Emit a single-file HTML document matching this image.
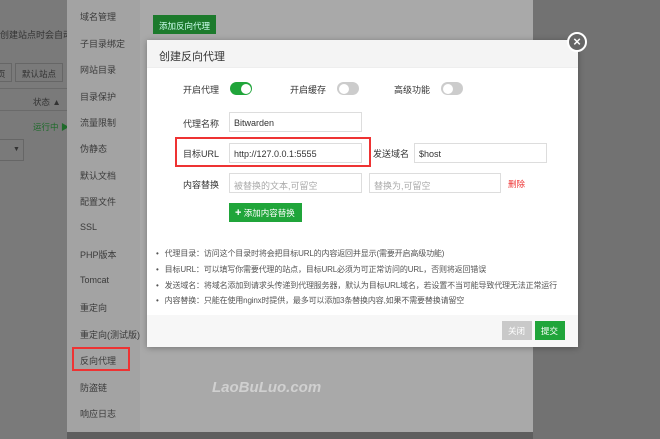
<!DOCTYPE html>
<html><head><meta charset="utf-8"><style>
*{margin:0;padding:0;box-sizing:border-box}
body{width:660px;height:439px;overflow:hidden;background:#7a7a7a;font-family:"Liberation Sans","Noto Sans CJK SC",sans-serif;position:relative;font-size:9px;color:#333}
.a{position:absolute;white-space:nowrap}
.panel{left:67px;top:0;width:466px;height:432px;background:#a9a9a9}
.side{left:67px;top:0;width:73px;height:432px;background:#a3a3a3}
.si{left:80px;font-size:9px;color:#3a3a3a}
.dlg{left:147px;top:40px;width:431px;height:307px;background:#fff;box-shadow:0 1px 6px rgba(0,0,0,.3)}
.hd{left:0;top:0;width:431px;height:28px;background:#f4f4f4;border-bottom:1px solid #eee}
.ft{left:0;top:275px;width:431px;height:32px;background:#f7f7f7}
.lb{font-size:9px;color:#333}
.in{border:1px solid #ddd;height:20px;font-size:9px;padding:5px 4px;color:#333;background:#fff}
.ph{color:#aaa}
.tg{width:22px;height:13px;border-radius:7px;background:#ccc}
.tg i{position:absolute;top:1.5px;left:1.5px;width:10px;height:10px;border-radius:50%;background:#fff}
.tg.on{background:#20a53a}.tg.on i{left:10.5px}
.bl{left:9px;font-size:8px;color:#555;letter-spacing:-0.15px}
.bl:before{content:"•";margin-right:6px;color:#555}
</style></head><body>
<div class="a" style="left:0;top:28px;font-size:9px;color:#333">创建站点时会自动</div>
<div class="a" style="left:-5px;top:63px;width:17px;height:19px;border:1px solid #666"></div>
<div class="a" style="left:-3px;top:68px;font-size:8.5px;color:#333">页</div>
<div class="a" style="left:15px;top:63px;width:48px;height:19px;border:1px solid #666;font-size:8.5px;padding:4px 0 0 6px;color:#333">默认站点</div>
<div class="a" style="left:0;top:88px;width:67px;height:1px;background:#6a6a6a"></div>
<div class="a" style="left:33px;top:96px;font-size:8.5px;color:#333">状态 ▲</div>
<div class="a" style="left:0;top:110px;width:67px;height:1px;background:#6a6a6a"></div>
<div class="a" style="left:33px;top:121px;font-size:8.5px;color:#1e6b2a">运行中 ▶</div>
<div class="a" style="left:-3px;top:139px;width:27px;height:22px;border:1px solid #666;font-size:7px;padding:6px 0 0 15px">▼</div>
<div class="a" style="left:533px;top:0;width:127px;height:439px;background:#727272"></div>
<div class="a panel"></div>
<div class="a" style="left:67px;top:432px;width:466px;height:7px;background:#5e5e5e"></div>
<div class="a side"></div>
<div class="a si" style="top:10px">域名管理</div>
<div class="a si" style="top:37px">子目录绑定</div>
<div class="a si" style="top:63px">网站目录</div>
<div class="a si" style="top:90px">目录保护</div>
<div class="a si" style="top:116px">流量限制</div>
<div class="a si" style="top:142px">伪静态</div>
<div class="a si" style="top:169px">默认文档</div>
<div class="a si" style="top:195px">配置文件</div>
<div class="a si" style="top:222px">SSL</div>
<div class="a si" style="top:248px">PHP版本</div>
<div class="a si" style="top:275px">Tomcat</div>
<div class="a si" style="top:301px">重定向</div>
<div class="a si" style="top:328px">重定向(测试版)</div>
<div class="a si" style="top:354px">反向代理</div>
<div class="a" style="left:72px;top:347px;width:58px;height:24px;border:2px solid #e33"></div>
<div class="a si" style="top:381px">防盗链</div>
<div class="a si" style="top:407px">响应日志</div>
<div class="a" style="left:153px;top:15px;width:63px;height:19px;background:#1c7a2c;color:#cfe;font-size:8.5px;padding:5px 0 0 6px">添加反向代理</div>
<div class="a" style="left:212px;top:379px;font-size:15px;font-weight:bold;font-style:italic;color:rgba(255,255,255,.45)">LaoBuLuo.com</div>

<div class="a dlg">
 <div class="a hd"></div>
 <div class="a" style="left:12px;top:8px;font-size:11px;color:#333">创建反向代理</div>
 <div class="a lb" style="left:36px;top:43px">开启代理</div>
 <div class="a tg on" style="left:83px;top:42px"><i></i></div>
 <div class="a lb" style="left:143px;top:43px">开启缓存</div>
 <div class="a tg" style="left:190px;top:42px"><i></i></div>
 <div class="a lb" style="left:247px;top:43px">高级功能</div>
 <div class="a tg" style="left:294px;top:42px"><i></i></div>
 <div class="a lb" style="left:36px;top:77px">代理名称</div>
 <div class="a in" style="left:82px;top:72px;width:133px">Bitwarden</div>
 <div class="a lb" style="left:36px;top:107px">目标URL</div>
 <div class="a in" style="left:82px;top:103px;width:133px">http://127.0.0.1:5555</div>
 <div class="a" style="left:28px;top:97px;width:196px;height:30px;border:2px solid #e33"></div>
 <div class="a lb" style="left:226px;top:107px">发送域名</div>
 <div class="a in" style="left:267px;top:103px;width:133px">$host</div>
 <div class="a lb" style="left:36px;top:138px">内容替换</div>
 <div class="a in ph" style="left:82px;top:133px;width:133px">被替换的文本,可留空</div>
 <div class="a in ph" style="left:222px;top:133px;width:132px">替换为,可留空</div>
 <div class="a" style="left:361px;top:138px;font-size:8.5px;color:#e33">删除</div>
 <div class="a" style="left:82px;top:163px;width:73px;height:19px;background:#20a53a;color:#fff;font-size:8.5px;padding:4px 0 0 6px"><b style="font-size:11px;line-height:9px">+</b> 添加内容替换</div>
 <div class="a bl" style="top:208px">代理目录：访问这个目录时将会把目标URL的内容返回并显示(需要开启高级功能)</div>
 <div class="a bl" style="top:224px">目标URL：可以填写你需要代理的站点，目标URL必须为可正常访问的URL，否则将返回错误</div>
 <div class="a bl" style="top:240px">发送域名：将域名添加到请求头传递到代理服务器，默认为目标URL域名，若设置不当可能导致代理无法正常运行</div>
 <div class="a bl" style="top:255px">内容替换：只能在使用nginx时提供，最多可以添加3条替换内容,如果不需要替换请留空</div>
 <div class="a ft"></div>
 <div class="a" style="left:355px;top:281px;width:30px;height:19px;background:#c9c9c9;color:#fff;font-size:8.5px;padding:4px 0 0 6px">关闭</div>
 <div class="a" style="left:388px;top:281px;width:30px;height:19px;background:#20a53a;color:#fff;font-size:8.5px;padding:4px 0 0 6px">提交</div>
</div>
<div class="a" style="left:567px;top:32px;width:20px;height:20px;border-radius:50%;background:#666;border:2px solid #fff;color:#fff;font-size:13px;line-height:15px;text-align:center;font-weight:bold">×</div>
</body></html>
